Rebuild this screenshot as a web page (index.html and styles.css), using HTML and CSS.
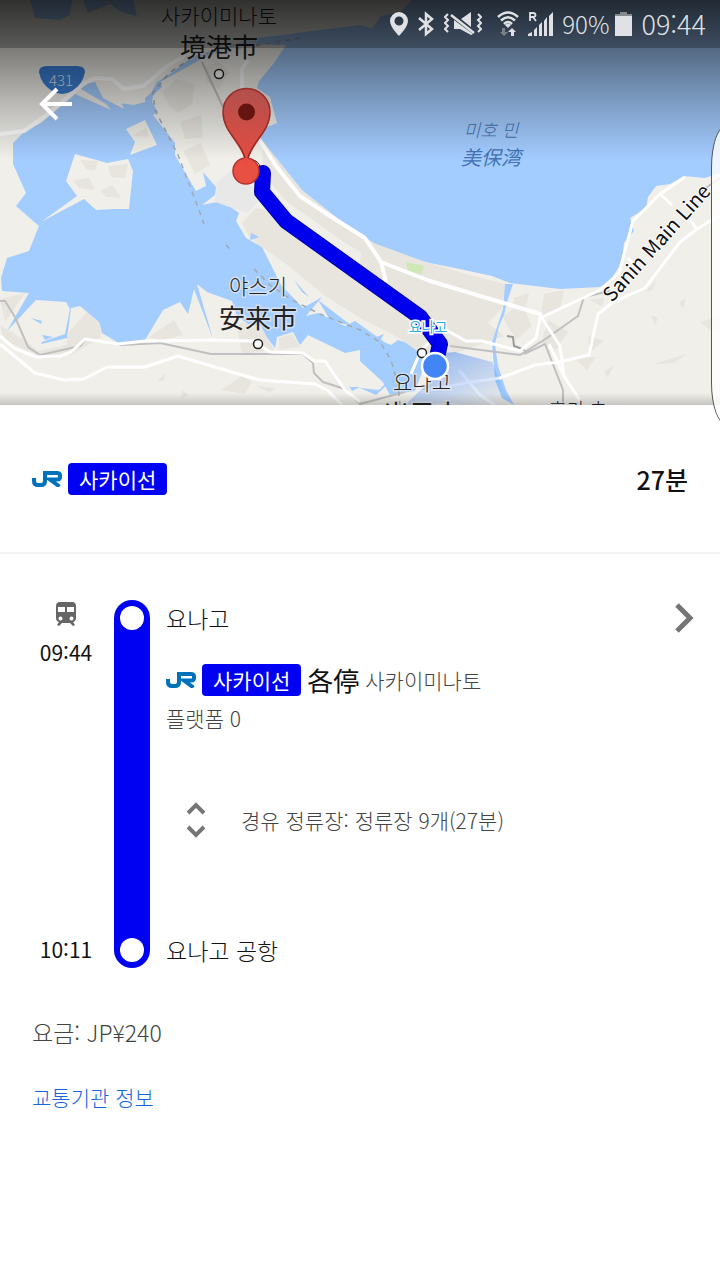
FILE: index.html
```html
<!DOCTYPE html>
<html lang="ko">
<head>
    <meta charset="UTF-8">
    <meta name="viewport" content="width=device-width, initial-scale=1.0">
    <title>사카이선 - 요나고 공항</title>
    <link rel="stylesheet" href="styles.css">
</head>
<body>

    <svg class="symbols" aria-hidden="true">
        <symbol id="jr" viewBox="0 0 30 16">
            <path d="M2 7v3q0 4 4 4h3q4 0 4-4V2h12q3 0 3 2.500v1.500q0 2.500-3 2.500H18l9.500 7" fill="none" stroke="#0072bc" stroke-width="4"/>
        </symbol>
    </svg>

    <header class="map">
        <svg class="map-canvas" viewBox="0 0 720 405" preserveAspectRatio="xMidYMid slice" role="img" aria-label="지도">
            <defs>
                <linearGradient id="pin-fill" x1="0" y1="0" x2="0" y2="1">
                    <stop offset="0" stop-color="#b0504c"/>
                    <stop offset="1" stop-color="#ee4b40"/>
                </linearGradient>
                <linearGradient id="beam" x1="0" y1="0" x2="1" y2="1">
                    <stop offset="0" stop-color="#4285f4" stop-opacity=".6"/>
                    <stop offset="1" stop-color="#4285f4" stop-opacity="0"/>
                </linearGradient>
                <linearGradient id="shade" x1="0" y1="0" x2="0" y2="1">
                    <stop offset="0" stop-opacity=".73"/>
                    <stop offset=".3" stop-opacity=".49"/>
                    <stop offset=".6" stop-opacity=".26"/>
                    <stop offset="1" stop-opacity="0"/>
                </linearGradient>
                <linearGradient id="edge" x1="0" y1="0" x2="0" y2="1">
                    <stop offset="0" stop-opacity="0"/>
                    <stop offset="1" stop-opacity=".18"/>
                </linearGradient>
            </defs>

            <!-- sea -->
            <rect width="720" height="405" fill="#a3ccff"/>

            <!-- land -->
            <g fill="#f0efea">
                <path d="M0 0H412L400 12 381 16 372 28 360 25 319 30 290 34 250 39 194 56 170 74 157 82 151 93 145 98 145 102 134 105 119 103 113 85 124 109 103 98 95 82 76 86 106 104 111 110 75 94 72 97 54 112 41 123 24 132 13 143 13 164 26 193 16 206 39 226 29 251 7 258 1 278 2 291 29 293 7 331 36 300 66 302 70 309 65 334 42 342 41 344 67 338 71 308 80 306 99 322 102 333 122 345 145 340 163 310 180 302 188 314 194 289 213 339 197 284 207 292 232 301 237 316 268 339 275 348 277 337 293 332 300 345 308 335 345 353 360 350 378 373 390 395 415 391 430 350 398 340 390 346 355 321 345 326 318 313 306 316 322 297 303 308 281 285 262 247 246 238 236 221 239 213 222 201 202 205 215 195 216 187 203 172 206 186 196 191 175 155 175 143 153 115 158 112 152 102 153 95 162 87 160 82 205 57 240 44 286 45 274 63 259 81 257 88 270 97 277 123 262 129 259 137 275 162 290 180 320 209 360 236 385 250 420 261 455 268 492 276 510 283 560 289 600 287 610 281 622 262 624 243 634 231 630 218 646 208 648 197 656 186 670 184 684 176 705 178 720 173V405H0Z"/>
                <path d="M75 154 107 163 128 159 133 171 129 209H113l-17 1-12-11-43 23 36-26-11-15Z"/>
                <path d="M126 129 145 120 157 145 130 155 135 142Z"/>
            </g>
            <path d="M217 182 235 167 262 198 247 213 215 202Z" fill="#e8e8e8"/>

            <!-- built-up areas -->
            <g fill="#e8e5df">
                <path d="M80 160 98 161 95 171 86 169ZM108 166 128 164 125 178 111 177ZM73 180 89 178 95 190 79 188ZM100 191 113 185 121 198 107 197ZM132 136 146 128 149 137Z"/>
                <path d="M162 92 176 79 195 84 192 104 178 113 170 106ZM180 122 201 115 203 138 185 139ZM183 151 201 143 210 165 195 174ZM204 68 218 61 229 72 219 89 207 82Z"/>
                <path d="M262 140 302 190 350 228 398 258 430 265 505 289 500 306 464 298 400 275 347 244 287 202 263 174Z"/>
                <path d="M275 212 288 221 335 259 373 285 410 322 437 350 424 356 399 338 362 319 325 296 290 267 250 238 242 223 256 208Z"/>
                <path d="M363 240 382 246 420 260 466 274 505 284 502 308 488 323 504 336 448 356 402 312 359 268Z"/>
                <path d="M514 298 529 293 526 309 513 312ZM544 294 564 290 560 309 541 316ZM502 316 522 304 532 326 516 340ZM548 320 568 332 556 350 541 344ZM589 300 604 298 602 306ZM588 336 604 341 590 352ZM574 358 596 357 587 370Z"/>
                <path d="M0 299 25 293 5 322ZM0 325 24 340 38 351 67 345 67 334 87 312 100 324 101 337 71 355 40 356 5 341Z"/>
                <path d="M149 337 174 320 183 335 158 341ZM236 322 261 326 274 350 242 354ZM279 338 292 334 300 347 279 350ZM221 390 242 376 252 382 245 394Z"/>
                <path d="M653 364 687 354 673 363 660 364ZM651 315 658 318 655 325ZM700 322 720 316V335L710 330ZM604 372 614 365 608 378ZM679 302 686 298 683 309ZM646 292 657 279 652 290Z"/>
                <path d="M157 382 166 372 164 380ZM182 390 189 395 181 399ZM257 386 275 388 270 393Z"/>
            </g>
            <path d="M406 262 424 266 421 275 408 271Z" fill="#d0e8b8"/>

            <!-- inland water -->
            <g fill="#a3ccff">
                <path d="M30 0H72L70 15 60 20 35 18ZM83 0h50l4 17-17-6-10-7-22 9ZM31 318 42 321 41 324ZM42 335 53 337 45 340ZM251 233 259 237 250 240ZM294 280 309 297 302 292ZM318 300 352 326 330 320Z"/>
                <path d="M505 284 513 284 507 302 504 315 499 326 495 344 498 366 506 390 514 405 502 398 495 380 492 342 503 309Z"/>
                <path d="M360 329 374 338 384 334 380 341 394 346 404 344 403 356 388 368 391 381 376 395 360 388 379 390 385 384 360 361Z"/>
                <path d="M345 378 350 387 360 387 352 391Z"/>
            </g>

            <!-- railways -->
            <g fill="none" stroke="#c1c0c1" stroke-width="2">
                <path d="M0 301H5L15 317 28 347 40 355 80 346 86 339 122 345 160 343 211 354 303 354 313 363 314 373 323 382 345 389 360 404 405 392"/>
                <path d="M450 346 520 355 547 338 578 316 584 297 610 291M524 354 545 344 563 390 563 405M202 62 223 107M700 192 720 178"/>
                <path d="M507 336 513 337 514 346 525 350" stroke="#999"/>
            </g>

            <!-- roads -->
            <g fill="none" stroke="#fff" stroke-width="3" stroke-linejoin="round">
                <path d="M0 134 24 131 48 114 70 95 85 83 95 78 112 79 124 89 143 86 151 80 167 66 194 51M242 100V69L248 60" stroke-width="4"/>
                <path d="M257 136 276 166 300 196 330 216 365 238 381 262 430 281 537 313 542 315M381 262 386 282" stroke-width="4"/>
                <path d="M0 336 14 348 36 357 60 356 71 352 85 339 118 344 145 341 211 340 253 341 270 352 303 353 314 361 325 361 345 390 360 402"/>
                <path d="M0 344 35 373 64 380 84 379 107 367 145 367 178 356 235 373 260 380 315 384 327 390 342 405"/>
                <path d="M411 374 421 350 444 329 466 341 482 341 520 351 536 338 540 318 600 290 619 273 633 221 660 194M540 315 560 346 564 376 577 396 582 405"/>
                <path d="M420 392 470 382 500 378 535 365 559 362 589 355 598 314 613 302 645 288 680 242 697 229 720 215M628 258 635 266M660 194 685 177M660 194 672 205M690 220 697 229M459 370 480 395 495 405M549 344 564 376"/>
            </g>
            <path d="M300 38 240 48 193 57 169 73 153 93 155 110 178 155 199 210 204 224M226 245 231 250M254 269 270 285 292 300 320 314 360 330 380 342 391 360 398 385 400 405" fill="none" stroke="#a4a9ad" stroke-width="1.500" stroke-dasharray="5 5"/>
            <path d="M300 42H410L438 30V0" fill="none" stroke="#bccbd8" stroke-dasharray="9 5"/>

            <path d="M39 72q0-6 8-6h30q8 0 8 6-2 12-13 19-10 6-20 0Q41 84 39 72Z" fill="#3a7fd5"/>
            <text class="shield" x="61" y="86">431</text>

            <path d="M434 354 455 352 492 362 510 405H405L440 372Z" fill="url(#beam)"/>

            <g class="place">
                <text x="219" y="24">사카이미나토</text>
                <text class="kanji" x="219" y="57">境港市</text>
                <text x="258" y="294">야스기</text>
                <text class="kanji" x="258" y="328">安来市</text>
                <text x="422" y="390">요나고</text>
                <text class="kanji" x="422" y="424">米子市</text>
                <text class="small" x="578" y="417">호키 초</text>
            </g>
            <g fill="#fff" stroke="#222" stroke-width="1.500">
                <circle cx="219" cy="74" r="4.500"/>
                <circle cx="258" cy="344" r="4.500"/>
                <circle cx="422" cy="353" r="4.500"/>
            </g>
            <g class="bay">
                <text x="491" y="137">미호 민</text>
                <text x="491" y="165">美保湾</text>
            </g>
            <text class="rail-name" transform="translate(612 303) rotate(-48)">Sanin Main Line</text>

            <!-- route -->
            <circle cx="252" cy="168" r="8" fill="#fff" stroke="#333"/>
            <path d="M263 173 262 192 286 221 420 317 440 344 435 366" fill="none" stroke="#0000a8" stroke-width="16" stroke-linejoin="round" stroke-linecap="round"/>
            <path d="M263 173 262 192 286 221 420 317 440 344 435 366" fill="none" stroke="#0000ed" stroke-width="14" stroke-linejoin="round" stroke-linecap="round"/>
            <circle cx="435" cy="366" r="13" fill="#4285f4" stroke="#fff" stroke-width="2.500"/>
            <text class="station-name" x="428" y="332">요나고</text>

            <rect width="720" height="160" fill="url(#shade)"/>
            <circle cx="246" cy="171" r="13" fill="#e95044" stroke="#b6322c" stroke-width="1.500"/>
            <path d="M246.500 171C246 145 223 136 223 112a23.500 23.500 0 0 1 47 0C270 136 247 145 246.500 171Z" fill="url(#pin-fill)"/>
            <path d="M245 158C241 141 223 132 223 112a23.500 23.500 0 0 1 47 0C270 132 252 141 248 158" fill="none" stroke="#982d28" stroke-width="1.500"/>
            <circle cx="246.500" cy="112" r="8.500" fill="#65150f"/>
            <rect y="393" width="720" height="12" fill="url(#edge)"/>
        </svg>

        <div class="status-bar">
            <svg width="18" height="26" viewBox="0 0 18 26" fill="currentColor"><path fill-rule="evenodd" d="M9 1a9 9 0 0 0-9 9c0 6 9 15 9 15s9-9 9-15a9 9 0 0 0-9-9Zm0 4.500a4.500 4.500 0 1 1 0 9 4.500 4.500 0 0 1 0-9Z"/></svg>
            <svg width="18" height="26" viewBox="0 0 18 26" fill="none" stroke="currentColor" stroke-width="2.500"><path d="M2 7 15 18 9 23V3L15 8 2 19"/></svg>
            <svg width="38" height="26" viewBox="0 0 38 26" fill="none" stroke="currentColor" stroke-width="2"><path d="M4 3 1 6 4 9 1 12 4 15 1 18 4 21M34 3 37 6 34 9 37 12 34 15 37 18 34 21"/><path d="M17 8 27 1v15ZM10 9 29 23 27 24 16 18H10Z" fill="currentColor" stroke="none"/><path d="M7 4 30 22" stroke-width="2.500"/></svg>
            <svg class="wifi" width="22" height="26" viewBox="0 0 22 26" fill="none" stroke="currentColor" stroke-width="2.500"><path d="M1 6Q11-3 21 6M4 9.500Q11 3 18 9.500M7 13Q11 9 15 13"/><path d="M11 17 8 14Q11 11 14 14Z" fill="currentColor" stroke="none"/><path d="M15 17 11 21h3v4h3v-4h2Z" fill="currentColor" stroke="none"/><path d="M7 25 3 21h2v-4h3v4h3Z" fill="#7b8087" stroke="none"/></svg>
            <svg width="25" height="26" viewBox="0 0 25 26" fill="currentColor"><path d="M0 25v-2l4-2v4ZM6 25v-6l3-3v9ZM11 25V14l3-3v14ZM16 25V10l3-4v19ZM21 25V5l4-4v24Z"/><path d="M2 10V2h3q2.500 0 2.500 2T5 6H2M5 6l3 4" fill="none" stroke="currentColor" stroke-width="1.800"/></svg>
            <span class="percent">90%</span>
            <svg width="17" height="26" viewBox="0 0 17 26" fill="currentColor"><path d="M0 4h17v21H0Z"/><path d="M5 1h7v2h5v2H0V3h5Z" fill="#858a91"/></svg>
            <time class="clock">09:44</time>
        </div>

        <button class="back" type="button" aria-label="뒤로">
            <svg width="34" height="34" viewBox="0 0 34 34" fill="none" stroke="#fff" stroke-width="4"><path d="M33 17H4M18 2 3 17 18 32"/></svg>
        </button>
        <div class="edge-handle"></div>
    </header>

    <main>
        <section class="summary">
            <div class="line">
                <svg width="30" height="16"><use href="#jr"/></svg>
                <span class="badge">사카이선</span>
            </div>
            <strong class="duration">27분</strong>
        </section>

        <section class="trip">
            <div class="times">
                <div class="departure">
                    <svg width="20" height="24" viewBox="0 0 20 24" fill="#666"><path fill-rule="evenodd" d="M4 0h12q4 0 4 4v12q0 3-3 4l2 3-2 1-3-3H6l-3 3-2-1 2-3q-3-1-3-4V4q0-4 4-4ZM2 5v5h7V5Zm9 0v5h7V5ZM4.500 14.500a2 2 0 1 0 0 4 2 2 0 0 0 0-4Zm11 0a2 2 0 1 0 0 4 2 2 0 0 0 0-4Z"/></svg>
                    <time>09:44</time>
                </div>
                <time>10:11</time>
            </div>
            <div class="track">
                <span class="stop"></span>
                <span class="stop"></span>
            </div>
            <div class="steps">
                <div class="station-row">
                    <h2 class="station">요나고</h2>
                    <button class="next" type="button" aria-label="요나고 정류장 정보">
                        <svg width="20" height="30" viewBox="0 0 20 30" fill="none" stroke="#757575" stroke-width="5"><path d="M3 2 16 15 3 28"/></svg>
                    </button>
                </div>
                <div class="line">
                    <svg width="30" height="16"><use href="#jr"/></svg>
                    <span class="badge">사카이선</span>
                    <span class="service">各停</span>
                    <span class="muted">사카이미나토</span>
                </div>
                <p class="platform muted">플랫폼 0</p>
                <button class="stops muted" type="button">
                    <svg width="18" height="36" viewBox="0 0 18 36" fill="none" stroke="#757575" stroke-width="4"><path d="M1 11 9 3 17 11M1 25 9 33 17 25"/></svg>
                    <span>경유 정류장: 정류장 9개(27분)</span>
                </button>
                <h2 class="station">요나고 공항</h2>
            </div>
        </section>

        <p class="fare muted">요금: JP¥240</p>
        <a class="agency" href="#">교통기관 정보</a>
    </main>

</body>
</html>
```
FILE: styles.css
```css
* {
    box-sizing: border-box;
}

body {
    margin: 0;
    background-color: #fff;
    color: #111;
    font-family: "Noto Sans CJK KR", sans-serif;
    font-size: 21px;
    line-height: 32px;
    overflow-x: hidden;
}

h2,
p {
    margin: 0;
}

button {
    padding: 0;
    border: 0;
    background: none;
    font: inherit;
    cursor: pointer;
}

svg {
    display: block;
    flex: none;
}

.symbols {
    position: absolute;
    width: 0;
    height: 0;
}

/* map */
.map {
    position: relative;
}

.map-canvas {
    width: 100%;
    height: auto;
}

.map-canvas text {
    text-anchor: middle;
    font-size: 21px;
    font-weight: 300;
}

.place text {
    fill: #222;
    stroke: rgba(240, 239, 234, 0.6);
    stroke-width: 3px;
    paint-order: stroke;
}

.map-canvas .kanji {
    font-family: "Noto Sans CJK JP", sans-serif;
    font-size: 26px;
    font-weight: 400;
}

.map-canvas .small {
    font-size: 19px;
}

.map-canvas .shield {
    fill: #dde6f3;
    font-size: 15px;
}

.map-canvas .bay text {
    fill: #4474b4;
    font-style: italic;
    font-size: 20px;
    font-weight: 400;
}

.map-canvas .bay text:first-child {
    font-size: 18px;
    font-weight: 300;
}

.map-canvas .rail-name {
    text-anchor: start;
    fill: #111;
    stroke: #fff;
    stroke-width: 2px;
    paint-order: stroke;
    font-size: 20px;
    font-weight: 400;
}

.map-canvas .station-name {
    fill: #2fb0e4;
    stroke: #fff;
    stroke-width: 3px;
    paint-order: stroke;
    font-size: 14px;
    font-weight: 400;
}

.status-bar {
    position: absolute;
    top: 0;
    left: 0;
    right: 0;
    display: flex;
    align-items: center;
    justify-content: flex-end;
    gap: 9px;
    height: 48px;
    padding-right: 14px;
    background-color: rgba(0, 0, 0, 0.25);
    color: #dfe1e4;
    font-weight: 300;
}

.wifi {
    margin: 0 0 0 6px;
}

.percent {
    font-size: 24px;
    margin-right: -3px;
}

.clock {
    font-size: 27px;
}

.back {
    position: absolute;
    top: 87px;
    left: 39px;
}

.edge-handle {
    position: absolute;
    top: 125px;
    right: -22px;
    width: 31px;
    height: 300px;
    border: 1px solid #555;
    border-radius: 22px / 60px;
    background-color: rgba(255, 255, 255, 0.8);
}

/* route details */
.summary {
    display: flex;
    align-items: center;
    justify-content: space-between;
    height: 149px;
    padding: 0 32px;
    border-bottom: 2px solid #f2f2f2;
}

.line {
    display: flex;
    align-items: center;
    gap: 6px;
}

.badge {
    padding: 0 11px;
    border-radius: 4px;
    background-color: #0000f2;
    color: #fff;
}

.duration {
    font-size: 25px;
    font-weight: 500;
}

.trip {
    display: flex;
    padding: 46px 26px 0 32px;
}

.times {
    display: flex;
    flex-direction: column;
    justify-content: space-between;
    width: 68px;
    padding: 2px 0 3px;
    text-align: center;
}

.departure {
    display: flex;
    flex-direction: column;
    align-items: center;
    gap: 10px;
}

.track {
    display: flex;
    flex-direction: column;
    justify-content: space-between;
    align-items: center;
    width: 36px;
    height: 368px;
    margin: 0 16px 0 14px;
    padding: 6px 0;
    border-radius: 18px;
    background-color: #0000f2;
}

.stop {
    width: 24px;
    height: 24px;
    border-radius: 50%;
    background-color: #fff;
}

.steps {
    flex: 1;
}

.station-row {
    display: flex;
    align-items: center;
    justify-content: space-between;
    margin-bottom: 28px;
}

.station {
    font-size: 23px;
    font-weight: 300;
    line-height: 36px;
}

.service {
    font-family: "Noto Sans CJK JP", sans-serif;
    font-size: 26px;
}

.muted {
    color: #444;
    font-weight: 300;
}

.platform {
    margin-top: 6px;
}

.stops {
    display: flex;
    align-items: center;
    gap: 36px;
    margin: 68px 0 94px;
    padding-left: 21px;
}

.fare {
    margin: 48px 32px 33px;
    font-size: 23px;
}

.agency {
    margin-left: 32px;
    color: #1565e0;
    font-weight: 300;
    text-decoration: none;
}
```
